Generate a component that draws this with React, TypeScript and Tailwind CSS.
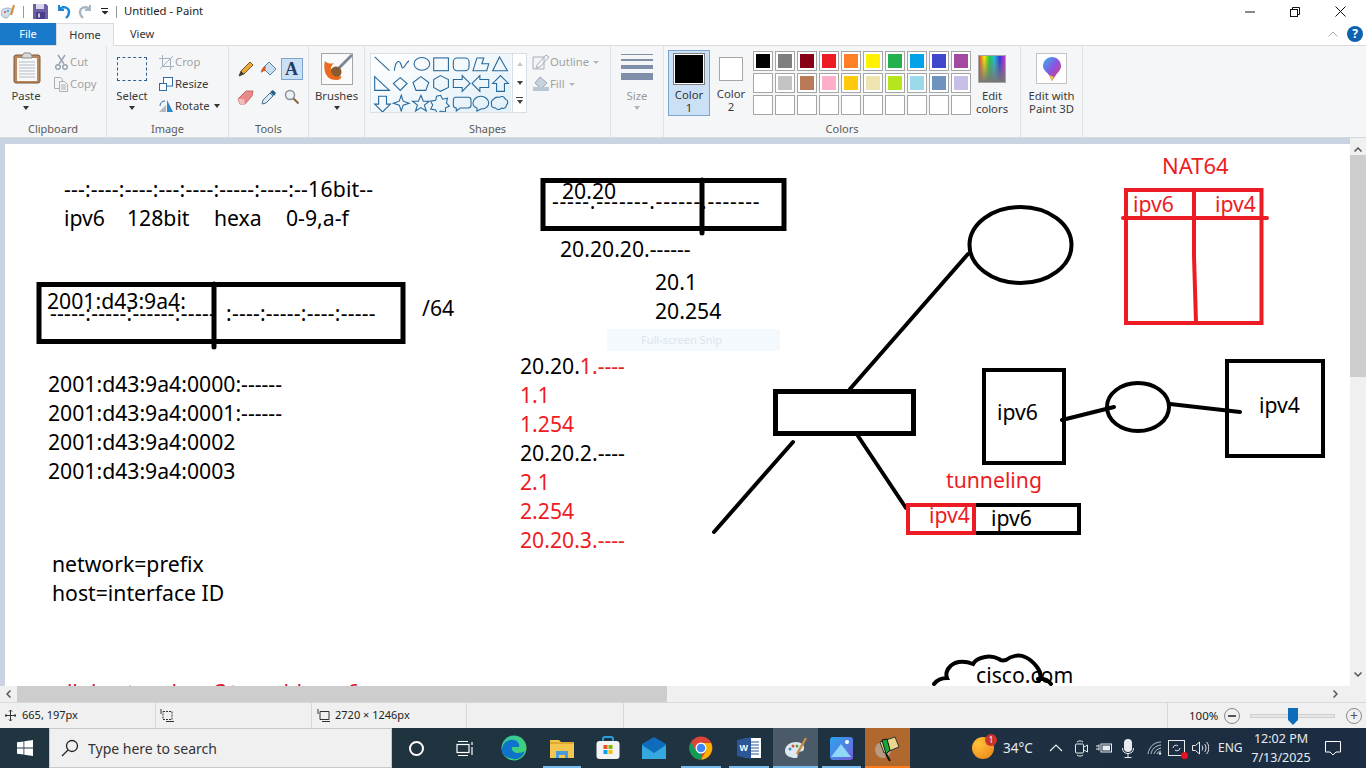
import React from "react";

const ui = { fontFamily: '"Noto Sans","Open Sans",sans-serif' };
const hand = { fontFamily: '"Noto Sans","Open Sans",sans-serif' };

function Group({ w, label, children }: { w: number; label?: string; children: React.ReactNode }) {
  return (
    <div className="flex h-full shrink-0 flex-col border-r border-[#dfe2e6]" style={{ width: w }}>
      <div className="flex min-h-0 flex-1">{children}</div>
      <div className="mb-[1px] h-[14px] text-center text-[11px] leading-[14px] text-[#5b5b5b]">{label}</div>
    </div>
  );
}
const Caret = ({ c = "#333" }: { c?: string }) => <span className="mx-auto mt-[2px] block h-0 w-0 border-x-[3.5px] border-t-[4px] border-x-transparent" style={{ borderTopColor: c }} />;
const Tiny = ({ c = "#b5b5b5" }: { c?: string }) => <span className="ml-[4px] h-0 w-0 border-x-[3px] border-t-[3px] border-x-transparent" style={{ borderTopColor: c }} />;

function BigBtn({ w, label, dim, children }: { w: number | string; label: string; dim?: boolean; children: React.ReactNode }) {
  return (
    <div className="flex shrink-0 flex-col pt-[6px] text-center" style={{ width: w }}>
      <div className="flex h-[36px] items-start justify-center">{children}</div>
      <div className={dim ? "leading-[16px] text-[#9a9a9a]" : "leading-[16px]"}>{label}</div>
      <Caret c={dim ? "#b5b5b5" : "#333"} />
    </div>
  );
}
function SmallBtn({ icon, label, dim, after }: { icon: React.ReactNode; label: string; dim?: boolean; after?: React.ReactNode }) {
  return (
    <div className="flex h-[22px] items-center">
      <div className="flex w-[18px] shrink-0 justify-center">{icon}</div>
      <span className={dim ? "leading-[16px] text-[#a2a2a2]" : "leading-[16px]"}>{label}</span>
      {after}
    </div>
  );
}

function Ribbon() {
  const row1 = ["#000000", "#7f7f7f", "#880015", "#ed1c24", "#ff7f27", "#fff200", "#22b14c", "#00a2e8", "#3f48cc", "#a349a4"];
  const row2 = ["#ffffff", "#c3c3c3", "#b97a57", "#ffaec9", "#ffc90e", "#efe4b0", "#b5e61d", "#99d9ea", "#7092be", "#c8bfe7"];
  const sw = (c: string | null, i: number) => (
    <div key={i} className="h-[20px] w-[20px] border border-[#a6a6a6] bg-white p-[2px]">
      {c && <div className="h-full w-full" style={{ background: c }} />}
    </div>
  );
  return (
    <div className="flex h-[92px] border-b border-[#d5d9de] bg-[#f5f6f7] text-[11.3px] text-[#3a3a3a]" style={ui}>
      <Group w={107} label="Clipboard">
        <BigBtn w={52} label="Paste">
          <svg className="ml-[2px]" width="28" height="32" viewBox="0 0 28 32">
            <rect x="1" y="3" width="26" height="28" rx="2" fill="#b8875a" stroke="#7d5a3a" />
            <rect x="4" y="6" width="20" height="23" fill="#f8f8f8" />
            <path d="M6 10h16M6 13h16M6 16h16M6 19h16M6 22h16M6 25h16" stroke="#b4bcc8" />
            <path d="M9 4l2-3h6l2 3v2H9z" fill="#d8dadc" stroke="#8a8a8a" />
          </svg>
        </BigBtn>
        <div className="flex flex-col pt-[5px]">
          <SmallBtn dim label="Cut" icon={
            <svg width="15" height="16" viewBox="0 0 15 16" fill="none" stroke="#9aa4b0" strokeWidth="1.5"><path d="M4 1l6 9M11 1L5 10" /><circle cx="4" cy="13" r="2.3" /><circle cx="11" cy="13" r="2.3" /></svg>
          } />
          <SmallBtn dim label="Copy" icon={
            <svg width="16" height="17" viewBox="0 0 16 17" fill="#f4f5f6" stroke="#a9afb8"><path d="M1.5 1.500h6l2 2v9h-8z" /><path d="M6.500 5.500h5l3 3v7h-8z" /><path d="M8 9h5M8 11h5M8 13h5" /></svg>
          } />
        </div>
      </Group>
      <Group w={122} label="Image">
        <BigBtn w={50} label="Select">
          <div className="mt-[5px] h-[24px] w-[30px] border border-dashed border-[#2f5f93]" />
        </BigBtn>
        <div className="flex flex-col pt-[5px]">
          <SmallBtn dim label="Crop" icon={
            <svg width="15" height="15" viewBox="0 0 15 15" fill="none" stroke="#a4b0bd"><path d="M3.500 0v11.500H15M0 3.500h11.500V15M1 14L14 1" /></svg>
          } />
          <SmallBtn label="Resize" icon={
            <svg width="14" height="14" viewBox="0 0 14 14" fill="#fff" stroke="#2f6ea8"><rect x="4.500" y="0.500" width="9" height="8.500" /><rect x="0.500" y="6.500" width="7" height="7" /></svg>
          } />
          <SmallBtn label="Rotate" after={<span className="ml-[4px] h-0 w-0 border-x-[3.5px] border-t-[4px] border-x-transparent border-t-[#333]" />} icon={
            <svg width="15" height="14" viewBox="0 0 15 14"><path d="M0 13L7 6v7z" fill="#b5b9bf" /><path d="M8 13V1l6 12z" fill="#2b87c9" /><path d="M1 7c0-3 2-5 5-5" fill="none" stroke="#2f6ea8" /></svg>
          } />
        </div>
      </Group>
      <Group w={80} label="Tools">
        <div className="grid grid-cols-[repeat(3,23px)] grid-rows-[22px_22px] place-items-center gap-y-[6px] pl-[5px] pt-[12px]">
          <svg width="16" height="16" viewBox="0 0 16 16"><path d="M1 15l2-5L12 1l3 3-9 9z" fill="#e8a83a" stroke="#7b5a20" /><path d="M1 15l2-5 3 3z" fill="#3b3b3b" /></svg>
          <svg width="18" height="18" viewBox="0 0 18 18"><path d="M9 2l7 7-6 6-7-7z" fill="#c9dff2" stroke="#5d7f9e" /><path d="M1 13c0-4 2-6 5-7l-1 5c-2 0-3 1-4 2z" fill="#e2571e" /></svg>
          <div className="flex h-[22px] w-[22px] items-center justify-center border border-[#7ba5cf] bg-[#cbe0f4] text-[18px] font-bold leading-none text-[#1f3d63]" style={{ fontFamily: '"Liberation Serif",serif' }}>A</div>
          <svg width="17" height="15" viewBox="0 0 17 15"><path d="M1 9l8-8h7l-1 5-7 8H3z" fill="#e98a8a" stroke="#c86a6a" /><path d="M1 9l6 0 1 5H3z" fill="#f3bcbc" /></svg>
          <svg width="16" height="16" viewBox="0 0 16 16"><path d="M1 15l1-4 7-7 3 3-7 7z" fill="#d5e9f7" stroke="#4f6f8e" /><path d="M9 3l3-2 3 3-2 3z" fill="#23628e" /></svg>
          <svg width="16" height="16" viewBox="0 0 16 16" fill="none"><circle cx="6" cy="6" r="4.500" stroke="#8a8f96" strokeWidth="1.5" fill="#eaf2f8" /><path d="M9.500 9.500l5 5" stroke="#8c6239" strokeWidth="2" /></svg>
        </div>
      </Group>
      <Group w={56}>
        <BigBtn w="100%" label="Brushes">
          <svg className="mt-[1px]" width="32" height="32" viewBox="0 0 32 32">
            <rect x="0.500" y="0.500" width="31" height="31" fill="#fafafa" stroke="#a6a6a6" />
            <path d="M31 2L17 16" stroke="#7b8898" strokeWidth="3" />
            <circle cx="15" cy="19" r="5.500" fill="#8a5a30" />
            <path d="M4 8c-2 8 0 19 11 19 4 0 6-2 5-4-4 2-9 0-10-5-.6-3 0-5 3-8-3 1-6 1-9-2z" fill="#ea6a1f" />
          </svg>
        </BigBtn>
      </Group>
      <Group w={246} label="Shapes">
        <div className="ml-[5px] mt-[7px] flex h-[60px] w-[157px] border border-[#dadfe5] bg-white">
          <svg className="h-full w-[142px]" viewBox="0 0 142 59" fill="none" stroke="#27689b" strokeWidth="1.1">
            <defs><linearGradient id="g" x1="0" y1="0" x2="1" y2="1"><stop offset="0" stopColor="#fff" /><stop offset="1" stopColor="#c9e3f2" /></linearGradient></defs>
            <rect width="142" height="59" fill="url(#g)" stroke="none" opacity="0.55" />
            <path d="M3 3l15 14" />
            <path d="M23 17c1-9 4-11 6-8s1 6 3 5 3-6 6-7" />
            <ellipse cx="51" cy="10" rx="8" ry="6.500" />
            <rect x="63" y="4" width="15" height="13" />
            <rect x="83" y="4" width="16" height="13" rx="4" />
            <path d="M103 17l4-13h7l-2 6h7l-2 7z" />
            <path d="M130 3l8 14h-15z" />
            <path d="M3 23l15 14H3z" />
            <path d="M29 24l7 6-7 7-7-7z" />
            <path d="M50 23l8 6-3 8H45l-3-8z" />
            <path d="M70 22l8 4v8l-8 4-7-4v-8z" />
            <path d="M83 26h9v-4l8 8-8 8v-4h-9z" />
            <path d="M119 26h-9v-4l-8 8 8 8v-4h9z" />
            <path d="M131 22l8 8h-4v8h-8v-8h-4z" />
            <path d="M7 43h8v8h4l-8 8-8-8h4z" />
            <path d="M30 42l2 6 6 2-6 2-2 6-2-6-6-2 6-2z" />
            <path d="M50 42l2.500 6h6l-5 4 2 6-5.500-3.500-5.500 3.500 2-6-5-4h6z" />
            <path d="M70 42l2 4 5-1-1 5 3 3-4 2 0 4-5-1-3 3-2-4-5-1 2-4-2-4 5-1 1-4z" />
            <path d="M85 44h13a3 3 0 013 3v5a3 3 0 01-3 3h-8l-4 3v-3a3 3 0 01-3-3v-5a3 3 0 012-3z" />
            <path d="M103 50c0-4 4-7 8-7s8 3 8 7-4 6-8 6l-4 2v-3c-2-1-4-3-4-5z" />
            <path d="M124 46c2-3 4-2 6-2 3-2 5 0 6 2 3 1 3 4 1 6 0 3-3 4-5 3-2 2-5 2-6 0-3 0-5-2-4-4-1-2 0-4 2-5z" />
          </svg>
          <div className="flex w-[14px] flex-col items-center border-l border-[#dadfe5]">
            <span className="mt-[8px] h-0 w-0 border-x-[3px] border-b-[4px] border-x-transparent border-b-[#c5c5c5]" />
            <span className="mt-[15px] h-0 w-0 border-x-[3.5px] border-t-[4px] border-x-transparent border-t-[#444]" />
            <span className="mt-[12px] h-[1px] w-[7px] bg-[#444]" />
            <span className="mt-[2px] h-0 w-0 border-x-[3.5px] border-t-[4px] border-x-transparent border-t-[#444]" />
          </div>
        </div>
        <div className="ml-[5px] flex flex-col pt-[5px]">
          <SmallBtn dim label="Outline" after={<Tiny />} icon={
            <svg width="18" height="16" viewBox="0 0 18 16" fill="none" stroke="#a9b0ba"><path d="M1 3h11v12H1zM5 11l9-10 3 2-9 10-4 1z" fill="#f2f4f6" /></svg>
          } />
          <SmallBtn dim label="Fill" after={<Tiny />} icon={
            <svg width="17" height="16" viewBox="0 0 17 16"><path d="M7 1l7 6-6 6-6-6z" fill="#c7d2dd" stroke="#98a7b5" /><rect x="0" y="11" width="16" height="4" fill="#b8c6d3" /></svg>
          } />
        </div>
      </Group>
      <Group w={53}>
        <BigBtn w="100%" dim label="Size">
          <div className="mt-[2px] flex w-[32px] flex-col gap-[4px]">
            <div className="h-[1px] bg-[#7f8fa9]" /><div className="h-[2px] bg-[#7f8fa9]" /><div className="h-[4px] bg-[#7f8fa9]" /><div className="h-[7px] bg-[#7f8fa9]" />
          </div>
        </BigBtn>
      </Group>
      <Group w={357} label="Colors">
        <div className="flex pl-[4px] pt-[4px]">
          <div className="h-[66px] w-[42px] border border-[#7ba5cf] bg-[#cbe0f4] text-center leading-[13px] text-[#333]">
            <div className="mx-auto mb-[3px] mt-[2px] h-[32px] w-[32px] border border-[#808080] bg-white p-[1px]"><div className="h-full w-full bg-black" /></div>
            Color<br />1
          </div>
          <div className="ml-[1px] h-[66px] w-[40px] text-center leading-[13px]">
            <div className="mx-auto mb-[6px] mt-[7px] h-[24px] w-[24px] border border-[#a6a6a6] bg-white" />
            Color<br />2
          </div>
          <div className="ml-[2px] mt-[1px] grid h-fit grid-cols-[repeat(10,20px)] gap-[2px]">
            {row1.map(sw)}
            {row2.map((c, i) => sw(c, i + 10))}
            {Array.from({ length: 10 }).map((_, i) => sw(null, i + 20))}
          </div>
          <div className="ml-[1px] flex w-[40px] flex-col items-center pt-[5px] text-center leading-[13px]">
            <div className="mb-[6px] h-[28px] w-[28px] border border-[#a6a6a6] bg-[linear-gradient(to_bottom,transparent,#777),linear-gradient(to_right,#e33,#fe0,#2c4,#2bd,#33d,#c3c)]" />
            <div>Edit<br />colors</div>
          </div>
        </div>
      </Group>
      <Group w={62}>
        <div className="flex w-full flex-col items-center pt-[7px] text-center leading-[13px]">
          <div className="mb-[5px] flex h-[31px] w-[31px] items-center justify-center border border-[#c4c4c4] bg-white">
            <svg width="20" height="26" viewBox="0 0 20 26">
              <defs><linearGradient id="p3" x1="0" y1="0" x2="1" y2="1"><stop offset="0" stopColor="#2fb8ea" /><stop offset="0.5" stopColor="#8a54e0" /><stop offset="1" stopColor="#ef3d5c" /></linearGradient></defs>
              <path d="M10 1c5 0 9 4 9 9 0 4-3 6-5 9l-4 6-3-6c-2-3-6-5-6-9 0-5 4-9 9-9z" fill="url(#p3)" />
              <path d="M7 19l3 6 2-4z" fill="#f5c23e" />
            </svg>
          </div>
          <div>Edit with<br />Paint 3D</div>
        </div>
      </Group>
    </div>
  );
}

function T({ x, y, c, s = 21.2, ls = 0, children }: { x: number; y: number; c?: string; s?: number; ls?: number; children: React.ReactNode }) {
  return (
    <div className="absolute whitespace-pre leading-none" style={{ left: x, top: y, color: c ?? "#000", fontSize: s, letterSpacing: ls, ...hand }}>
      {children}
    </div>
  );
}
const RED = "#ed1c24";

function Drawing() {
  return (
    <svg className="absolute left-0 top-0" width="1350" height="686" viewBox="0 0 1350 686" fill="none" strokeLinecap="round">
      <g stroke="#000" strokeWidth="5">
        <path d="M39 284.500h364v57H39z" strokeLinecap="butt" />
        <path d="M214 284v63" />
        <path d="M543 180.500h241v48H543z" strokeLinecap="butt" />
        <path d="M702 180v53" />
        <ellipse cx="1020.500" cy="245" rx="51" ry="38" strokeWidth="4" />
        <path d="M968 254L850 389" strokeWidth="4" />
        <path d="M775.500 391.500h138v42h-138z" strokeWidth="5" strokeLinecap="butt" />
        <path d="M793 442l-79 90" strokeWidth="4" />
        <path d="M858 436l48 72" strokeWidth="4" />
        <rect x="984" y="370" width="80" height="93" strokeWidth="4" />
        <path d="M1062 420l52-13" strokeWidth="4" />
        <ellipse cx="1138" cy="407" rx="31" ry="24" strokeWidth="4" />
        <path d="M1170 404l70 8" strokeWidth="4" />
        <rect x="1227" y="361" width="96" height="95" strokeWidth="4" />
        <path d="M974 505h105v28H974" strokeWidth="4" />
        <path d="M934 684c3-4 8-6 13-6-2-5 1-12 8-15 6-2 13-1 18 1 2-4 7-6 12-7 5-1 10 0 14 2 1 1 3 2 7 1 5-4 13-6 19-3 5 2 9 6 12 10 3 4 5 9 2 14m-1-2c5-1 10 1 13 5" strokeWidth="4" />
      </g>
      <g stroke="#ed1c24">
        <path d="M908 505h66v28h-66z" strokeWidth="4" strokeLinecap="butt" />
        <path d="M1126 190h135.500v133H1126z" strokeWidth="4" strokeLinecap="butt" />
        <path d="M1123 218h144" strokeWidth="4" />
        <path d="M1194 190v66l2 67" strokeWidth="4" strokeLinecap="butt" />
      </g>
    </svg>
  );
}

function CanvasArea() {
  return (
    <div className="relative h-[542px] w-[1345px] overflow-hidden bg-white">
      <div className="absolute left-[-5px] top-[-144px] h-[686px] w-[1350px]">
        <div className="absolute left-[607px] top-[329px] flex h-[22px] w-[173px] items-center justify-center bg-[#f4f9fe] pr-[24px] text-[11px] text-[#dde5ec]" style={ui}>Full-screen Snip</div>
        <Drawing />
        <T x={64} y={178} ls={0.18}>---:----:----:---:----:-----:----:--16bit--</T>
        <T x={64} y={207}>ipv6</T>
        <T x={127} y={207}>128bit</T>
        <T x={214} y={207}>hexa</T>
        <T x={286} y={207}>0-9,a-f</T>
        <T x={47} y={290}>2001:d43:9a4:</T>
        <T x={50} y={303} s={21} ls={0.3}>-----:-----:------:-----</T>
        <T x={226} y={303} s={21} ls={0.25}>:----:-----:----:-----</T>
        <T x={422} y={297}>/64</T>
        <T x={48} y={373}>2001:d43:9a4:0000:------</T>
        <T x={48} y={402}>2001:d43:9a4:0001:------</T>
        <T x={48} y={431}>2001:d43:9a4:0002</T>
        <T x={48} y={460}>2001:d43:9a4:0003</T>
        <T x={52} y={553}>network=prefix</T>
        <T x={52} y={582}>host=interface ID</T>
        <T x={55} y={681} c="#d8142c">all</T>
        <T x={91} y={681} c="#d8142c">host</T>
        <T x={139} y={681} c="#d8142c">and</T>
        <T x={215} y={681} c="#d8142c">3</T>
        <T x={230} y={681} c="#d8142c">to</T>
        <T x={264} y={681} c="#d8142c">add</T>
        <T x={347} y={681} c="#d8142c">6</T>
        <T x={562} y={180}>20.20</T>
        <T x={552} y={191} s={21} ls={0.8}>-----.-------.------.-------</T>
        <T x={560} y={238}>20.20.20.------</T>
        <T x={655} y={271}>20.1</T>
        <T x={655} y={300}>20.254</T>
        <T x={520} y={355}>20.20.<span style={{ color: RED }}>1.----</span></T>
        <T x={520} y={384} c={RED}>1.1</T>
        <T x={520} y={413} c={RED}>1.254</T>
        <T x={520} y={442}>20.20.2.----</T>
        <T x={520} y={471} c={RED}>2.1</T>
        <T x={520} y={500} c={RED}>2.254</T>
        <T x={520} y={529} c={RED}>20.20.3.----</T>
        <T x={1162} y={154} c={RED} s={22}>NAT64</T>
        <T x={1133} y={193} c={RED}>ipv6</T>
        <T x={1215} y={193} c={RED}>ipv4</T>
        <T x={997} y={401}>ipv6</T>
        <T x={1259} y={394}>ipv4</T>
        <T x={946} y={469} c={RED}>tunneling</T>
        <T x={929} y={504} c={RED}>ipv4</T>
        <T x={991} y={507}>ipv6</T>
        <T x={976} y={664}>cisco.com</T>
      </div>
    </div>
  );
}

function TaskIcon({ w, active, under, children }: { w: number; active?: boolean; under?: boolean; children: React.ReactNode }) {
  return (
    <div className="relative flex h-full shrink-0 items-center justify-center" style={{ width: w, background: active ? "#4a5a68" : undefined }}>
      {children}
      {under && <div className={active ? "absolute bottom-0 left-0 right-0 h-[2px] bg-[#76b9ed]" : "absolute bottom-0 left-[4px] right-[4px] h-[2px] bg-[#76b9ed]"} />}
    </div>
  );
}

function Taskbar() {
  return (
    <div className="flex h-[40px] items-center bg-[linear-gradient(to_right,#20353f,#1f3340_50%,#1c2c42)] text-white" style={ui}>
      <div className="flex h-full w-[49px] shrink-0 items-center justify-center">
        <svg width="16" height="16" viewBox="0 0 16 16" fill="#fff"><path d="M0 2.300l6.500-.9v6.200H0zM7.300 1.300L16 0v7.600H7.300zM0 8.400h6.500v6.200L0 13.700zM7.300 8.400H16V16l-8.700-1.300z" /></svg>
      </div>
      <div className="flex h-full w-[343px] shrink-0 items-center border border-[#c8c8c8] bg-[#f0f0f0] pl-[11px] text-[14px] text-[#333]">
        <svg width="18" height="18" viewBox="0 0 18 18" fill="none" stroke="#222" strokeWidth="1.300"><circle cx="11" cy="7" r="5.500" /><path d="M7 11l-6 6" /></svg>
        <span className="ml-[9px]">Type here to search</span>
      </div>
      <div className="flex h-full w-[49px] shrink-0 items-center justify-center">
        <div className="h-[15px] w-[15px] rounded-full border-[2px] border-white" />
      </div>
      <div className="flex h-full w-[47px] shrink-0 items-center justify-center">
        <svg width="17" height="15" viewBox="0 0 17 15" fill="none" stroke="#fff" strokeWidth="1.200"><path d="M2 0.500h10M2 14.500h10" /><rect x="1" y="3.500" width="12" height="8" /><path d="M16 1v3M16 6v8" /></svg>
      </div>
      <TaskIcon w={51}>
        <svg width="26" height="26" viewBox="0 0 26 26"><defs><linearGradient id="e1" x1="0" y1="0" x2="1" y2="1"><stop offset="0" stopColor="#32c6a0" /><stop offset="1" stopColor="#46d66b" /></linearGradient></defs><circle cx="13" cy="13" r="12.500" fill="url(#e1)" /><path d="M1 14C2 7 8 4 13 5c4 1 6 4 5 7h-7c-1 3 2 6 6 6 3 0 5-1 7-2-2 6-7 9-12 8C6 23 0 20 1 14z" fill="#0f74c9" /></svg>
      </TaskIcon>
      <TaskIcon w={46} under>
        <svg width="24" height="20" viewBox="0 0 24 20"><path d="M0 2h9l2 2h13v16H0z" fill="#f3c64f" /><path d="M0 4h24v2H0z" fill="#e0a92e" /><path d="M6 13h12v7h-3v-3H9v3H6z" fill="#4a9bdc" /></svg>
      </TaskIcon>
      <TaskIcon w={46}>
        <svg width="24" height="24" viewBox="0 0 24 24"><path d="M7 6V3a2 2 0 012-2h6a2 2 0 012 2v3" fill="none" stroke="#2a9bd8" strokeWidth="2" /><rect x="0.500" y="5" width="23" height="18" rx="3" fill="#f3f3f3" /><rect x="7.500" y="9" width="4" height="4" fill="#f25022" /><rect x="12.500" y="9" width="4" height="4" fill="#7fba00" /><rect x="7.500" y="14" width="4" height="4" fill="#00a4ef" /><rect x="12.500" y="14" width="4" height="4" fill="#ffb900" /></svg>
      </TaskIcon>
      <TaskIcon w={46}>
        <svg width="24" height="22" viewBox="0 0 24 22"><path d="M0 7l12-7 12 7v15H0z" fill="#0f6cbd" /><path d="M0 8l12 8 12-8v14H0z" fill="#35a8e0" /></svg>
      </TaskIcon>
      <TaskIcon w={48} under>
        <svg width="24" height="24" viewBox="0 0 48 48"><circle cx="24" cy="24" r="23" fill="#db4437" /><path d="M24 24L4 36a23 23 0 0020 11z" fill="#0f9d58" /><path d="M4 36A23 23 0 014 12l10 18z" fill="#0f9d58" /><path d="M24 14h20a23 23 0 01-20 33l10-17z" fill="#f4b400" /><circle cx="24" cy="24" r="11" fill="#fff" /><circle cx="24" cy="24" r="8.500" fill="#4285f4" /></svg>
      </TaskIcon>
      <TaskIcon w={48} under>
        <svg width="24" height="22" viewBox="0 0 24 22"><rect x="8" y="1" width="16" height="20" fill="#fff" /><path d="M13 5h9M13 8h9M13 11h9M13 14h9M13 17h9" stroke="#2b579a" /><path d="M0 3l14-3v22L0 19z" fill="#2b579a" /><text x="2.500" y="14" fontSize="9" fontWeight="700" fill="#fff" fontFamily="Liberation Sans">W</text></svg>
      </TaskIcon>
      <TaskIcon w={45} active under>
        <svg width="24" height="24" viewBox="0 0 24 24"><path d="M1 15c0-6 6-9 11-9s9 3 8 7-5 1-6 4 1 5-3 5-10-2-10-7z" fill="#dfe8ef" /><circle cx="6" cy="13" r="1.500" fill="#3b8fd0" /><circle cx="9" cy="10" r="1.500" fill="#e0483a" /><circle cx="13" cy="10" r="1.500" fill="#5aa33b" /><path d="M13 18L22 2" stroke="#c48b4a" strokeWidth="2.500" /></svg>
      </TaskIcon>
      <TaskIcon w={47} under>
        <svg width="23" height="23" viewBox="0 0 23 23"><defs><linearGradient id="ph" x1="0" y1="0" x2="1" y2="1"><stop offset="0" stopColor="#2aa4f0" /><stop offset="1" stopColor="#7360d8" /></linearGradient></defs><rect width="23" height="23" rx="3" fill="url(#ph)" /><path d="M1 20L11 7l10 13z" fill="#8fd8fa" /><circle cx="17" cy="5" r="2" fill="#fff" /></svg>
      </TaskIcon>
      <div className="relative flex h-full w-[45px] shrink-0 items-center justify-center bg-[#b0682f]">
        <svg width="30" height="28" viewBox="0 0 30 28"><circle cx="10" cy="16" r="8" fill="#b89a80" /><path d="M7 8l15-5 4 10-15 6z" fill="#e9d88c" stroke="#333" /><path d="M9 6l4 14 4-4-3-11z" fill="#17a83a" stroke="#111" /><path d="M13 20l4 7" stroke="#111" strokeWidth="2" /></svg>
        <div className="absolute bottom-0 left-0 right-0 h-[2px] bg-[#ff7a1a]" />
      </div>
      <div className="ml-auto flex h-full items-center text-[#e8ecef]">
        <div className="relative mr-[9px] h-[22px] w-[22px] rounded-full bg-[radial-gradient(circle_at_30%_30%,#ffc23a,#ec7f14)]">
          <div className="absolute right-[-3px] top-[-3px] flex h-[12px] w-[12px] items-center justify-center rounded-full bg-[#c6352a] text-[8px] leading-none text-white">1</div>
        </div>
        <span className="mr-[17px] w-[29px] whitespace-nowrap text-[13.5px]">34°C</span>
        <svg className="mr-[12px]" width="14" height="8" viewBox="0 0 14 8" fill="none" stroke="#e8ecef" strokeWidth="1.200"><path d="M1 7l6-6 6 6" /></svg>
        <svg className="mr-[8px]" width="13" height="17" viewBox="0 0 13 17" fill="none" stroke="#e8ecef"><rect x="0.500" y="4" width="8" height="9" rx="1" /><path d="M9 7l3.500-2v7L9 10M2 2c2-1.500 4-1.500 6 0M2 15c2 1.500 4 1.500 6 0" /></svg>
        <svg className="mr-[10px]" width="16" height="10" viewBox="0 0 16 10"><rect x="5" y="1" width="10.500" height="8" fill="none" stroke="#e8ecef" /><rect x="6.500" y="2.500" width="7.500" height="5" fill="#e8ecef" /><path d="M0 3h3M0 6h3M3 1.500v6" stroke="#e8ecef" /></svg>
        <svg className="mr-[13px]" width="12" height="19" viewBox="0 0 12 19"><rect x="2" y="0" width="8" height="13" rx="4" fill="#e8ecef" /><path d="M0.500 9c0 3.500 2 5.500 5.500 5.500S11.500 12.500 11.500 9M6 14.500V18M2.500 18.500h7" stroke="#e8ecef" fill="none" /></svg>
        <svg className="mr-[6px]" width="15" height="14" viewBox="0 0 15 14" fill="none" stroke="#b9c2c9"><path d="M1 13C2 6 7 1 14 1M4 13c1-5 4-8 10-9M7 13c1-3 3-5 7-6M10 13c.5-1.500 2-3 4-3" /><circle cx="13" cy="12.500" r="1.200" fill="#e8ecef" stroke="none" /></svg>
        <div className="relative mr-[7px] flex h-[16px] w-[17px] items-center justify-center border border-[#e8ecef]">
          <div className="absolute bottom-[-4px] right-[-4px] h-[7px] w-[7px] rounded-full bg-[#e81123]" />
          <svg width="11" height="10" viewBox="0 0 11 10" fill="none" stroke="#e8ecef"><path d="M2 5a3 3 0 015-2M9 5a3 3 0 01-5 2" /></svg>
        </div>
        <svg className="mr-[9px]" width="17" height="14" viewBox="0 0 17 14" fill="none" stroke="#e8ecef"><path d="M0.500 4.500h3L7.500 1v12l-4-3.500h-3zM10 4.500c1 1.500 1 3.500 0 5M12.500 3c2 2 2 6 0 8M14.500 1c3 3 3 9 0 12" /></svg>
        <span className="mr-[9px] w-[24px] text-[12px]">ENG</span>
        <div className="mr-[14px] w-[60px] text-center text-[12.5px] leading-[19px]">12:02 PM<br />7/13/2025</div>
        <svg className="mr-[25px]" width="16" height="16" viewBox="0 0 16 16" fill="none" stroke="#fff"><path d="M0.500 1.500h15v10.500h-4.500l-3 3-3-3H0.500z" /></svg>
      </div>
    </div>
  );
}

export default function App() {
  return (
    <div className="flex h-[768px] w-[1366px] flex-col overflow-hidden bg-white text-[#222]" style={ui}>
      <div className="flex h-[23px] items-center bg-white text-[12px]">
        <svg className="ml-[1px]" width="15" height="15" viewBox="0 0 15 15"><path d="M0 9c0-4 4-5 7-5s5 2 5 4-3 1-4 3-1 3-3 3-5-2-5-5z" fill="#cfe0ea" stroke="#6e8fa5" strokeWidth=".6" /><circle cx="4" cy="8" r="1" fill="#e0483a" /><circle cx="7" cy="7" r="1" fill="#3b8fd0" /><path d="M10 11l3-10" stroke="#d98a2f" strokeWidth="2" /></svg>
        <div className="ml-[7px] h-[12px] w-[1px] bg-[#9a9a9a]" />
        <svg className="ml-[9px]" width="15" height="15" viewBox="0 0 15 15"><path d="M0 0h13l2 2v13H0z" fill="#6f5fa8" /><rect x="3" y="0" width="8" height="5" fill="#d9d6ea" /><rect x="3" y="8" width="9" height="7" fill="#4a3e85" /><rect x="5" y="9.500" width="2" height="4" fill="#c9c6e0" /></svg>
        <svg className="ml-[8px]" width="15" height="15" viewBox="0 0 15 15" fill="none"><path d="M3 1v5h5" stroke="#1b87d8" strokeWidth="2" /><path d="M3 6c2-3 6-4 9-1 2 3 1 6-2 9" stroke="#1b87d8" strokeWidth="2.400" /></svg>
        <svg className="ml-[7px]" width="15" height="15" viewBox="0 0 15 15" fill="none"><path d="M12 1v5H7" stroke="#a8b6c2" strokeWidth="2" /><path d="M12 6c-2-3-6-4-9-1-2 3-1 6 2 9" stroke="#a8b6c2" strokeWidth="2.400" /></svg>
        <svg className="ml-[8px]" width="8" height="7" viewBox="0 0 8 7"><path d="M0 0.500h7" stroke="#222" /><path d="M0.500 3h7L4 6.500z" fill="#222" /></svg>
        <div className="ml-[7px] h-[12px] w-[1px] bg-[#9a9a9a]" />
        <span className="ml-[7px] text-[11.3px] text-[#222]">Untitled - Paint</span>
        <div className="ml-auto flex h-full items-center">
          <svg className="mr-[35px]" width="10" height="2" viewBox="0 0 10 2"><path d="M0 1h10" stroke="#111" /></svg>
          <svg className="mr-[35px]" width="10" height="10" viewBox="0 0 10 10" fill="none" stroke="#111"><rect x="0.500" y="2.500" width="7" height="7" /><path d="M2.500 2.500v-2h7v7h-2" /></svg>
          <svg className="mr-[20px]" width="11" height="11" viewBox="0 0 11 11" fill="none" stroke="#111"><path d="M0.500 0.500l10 10M10.500 0.500l-10 10" /></svg>
        </div>
      </div>
      <div className="flex h-[23px] items-stretch border-b border-[#dadbdc] bg-white text-[11px]">
        <div className="flex w-[56px] items-center justify-center bg-[#1979ca] text-white">File</div>
        <div className="z-10 mb-[-1px] flex w-[58px] items-center justify-center border-x border-t border-[#dadbdc] bg-[#f5f6f7] text-[#333]">Home</div>
        <div className="flex w-[56px] items-center justify-center text-[#333]">View</div>
        <div className="ml-auto mr-[3px] flex items-center gap-[9px]">
          <svg width="10" height="6" viewBox="0 0 10 6" fill="none" stroke="#a9a9a9"><path d="M0.500 5.500L5 1l4.500 4.500" /></svg>
          <div className="flex h-[16px] w-[16px] items-center justify-center rounded-full bg-[#0f62b0] text-[12px] font-bold leading-none text-white">?</div>
        </div>
      </div>
      <Ribbon />
      <div className="flex min-h-0 flex-1 flex-col">
        <div className="flex h-[548px] bg-[#c9d3e2]">
          <div className="flex flex-1 flex-col pl-[5px] pt-[6px]">
            <CanvasArea />
          </div>
          <div className="flex w-[16px] shrink-0 flex-col items-center bg-[#f0f0f0]">
            <svg className="mt-[9px]" width="8" height="5" viewBox="0 0 8 5" fill="none" stroke="#555" strokeWidth="1.500"><path d="M0.500 4.500L4 1l3.500 3.500" /></svg>
            <div className="mt-[3px] h-[222px] w-full bg-[#cdcdcd]" />
            <div className="flex-1" />
            <svg className="mb-[9px]" width="8" height="5" viewBox="0 0 8 5" fill="none" stroke="#555" strokeWidth="1.500"><path d="M0.500 0.500L4 4l3.500-3.500" /></svg>
          </div>
        </div>
        <div className="flex h-[17px] items-center border-b border-[#d9d9d9] bg-[#f0f0f0]">
          <div className="flex h-full w-[17px] items-center justify-center">
            <svg width="5" height="8" viewBox="0 0 5 8" fill="none" stroke="#555" strokeWidth="1.500"><path d="M4.500 0.500L1 4l3.500 3.500" /></svg>
          </div>
          <div className="h-full w-[650px] bg-[#cdcdcd]" />
          <div className="flex-1" />
          <svg className="mr-[28px]" width="5" height="8" viewBox="0 0 5 8" fill="none" stroke="#555" strokeWidth="1.500"><path d="M0.500 0.500L4 4 0.500 7.500" /></svg>
        </div>
        <div className="flex h-[25px] items-center bg-[#f0f0f0] text-[11px] text-[#222]">
          <div className="flex h-full w-[156px] shrink-0 items-center border-r border-[#d9d9d9] pl-[5px]">
            <svg width="11" height="11" viewBox="0 0 11 11" fill="none" stroke="#333"><path d="M5.500 0v11M0 5.500h11M4 1.500L5.500 0 7 1.500M4 9.500L5.500 11 7 9.500M1.500 4L0 5.500 1.500 7M9.500 4L11 5.500 9.500 7" /></svg>
            <span className="ml-[6px]">665, 197px</span>
          </div>
          <div className="flex h-full w-[156px] shrink-0 items-center border-r border-[#d9d9d9] pl-[4px]">
            <svg width="14" height="13" viewBox="0 0 14 13" fill="none" stroke="#333"><path d="M1 0v5" /><path d="M3 2.500h9v8H3z" strokeDasharray="2 1" /><path d="M6 12.500h8" /></svg>
          </div>
          <div className="flex h-full w-[155px] shrink-0 items-center border-r border-[#d9d9d9] pl-[5px]">
            <svg width="14" height="13" viewBox="0 0 14 13" fill="none" stroke="#333"><path d="M1 0v5M3 2.500h9v8H3zM5 12.500h8" /></svg>
            <span className="ml-[4px]">2720 × 1246px</span>
          </div>
          <div className="h-full w-[157px] shrink-0 border-r border-[#d9d9d9]" />
          <div className="h-full flex-1" />
          <div className="flex h-full w-[199px] shrink-0 items-center border-l border-[#d9d9d9] pl-[21px]">
            <span className="w-[28px] text-[11.5px]">100%</span>
            <div className="ml-[7px] flex h-[16px] w-[16px] items-center justify-center rounded-full border border-[#8a8a8a]"><div className="h-[2px] w-[8px] bg-[#555]" /></div>
            <div className="relative ml-[10px] h-[4px] w-[85px] border border-[#d0d0d0] bg-[#e6e6e6]">
              <svg className="absolute left-[37px] top-[-7px]" width="10" height="17" viewBox="0 0 10 17"><path d="M0 0h10v12l-5 5-5-5z" fill="#0f6cbd" /></svg>
            </div>
            <div className="ml-[11px] flex h-[16px] w-[16px] items-center justify-center rounded-full border border-[#8a8a8a] text-[14px] leading-none text-[#555]">+</div>
          </div>
        </div>
        <Taskbar />
      </div>
    </div>
  );
}
